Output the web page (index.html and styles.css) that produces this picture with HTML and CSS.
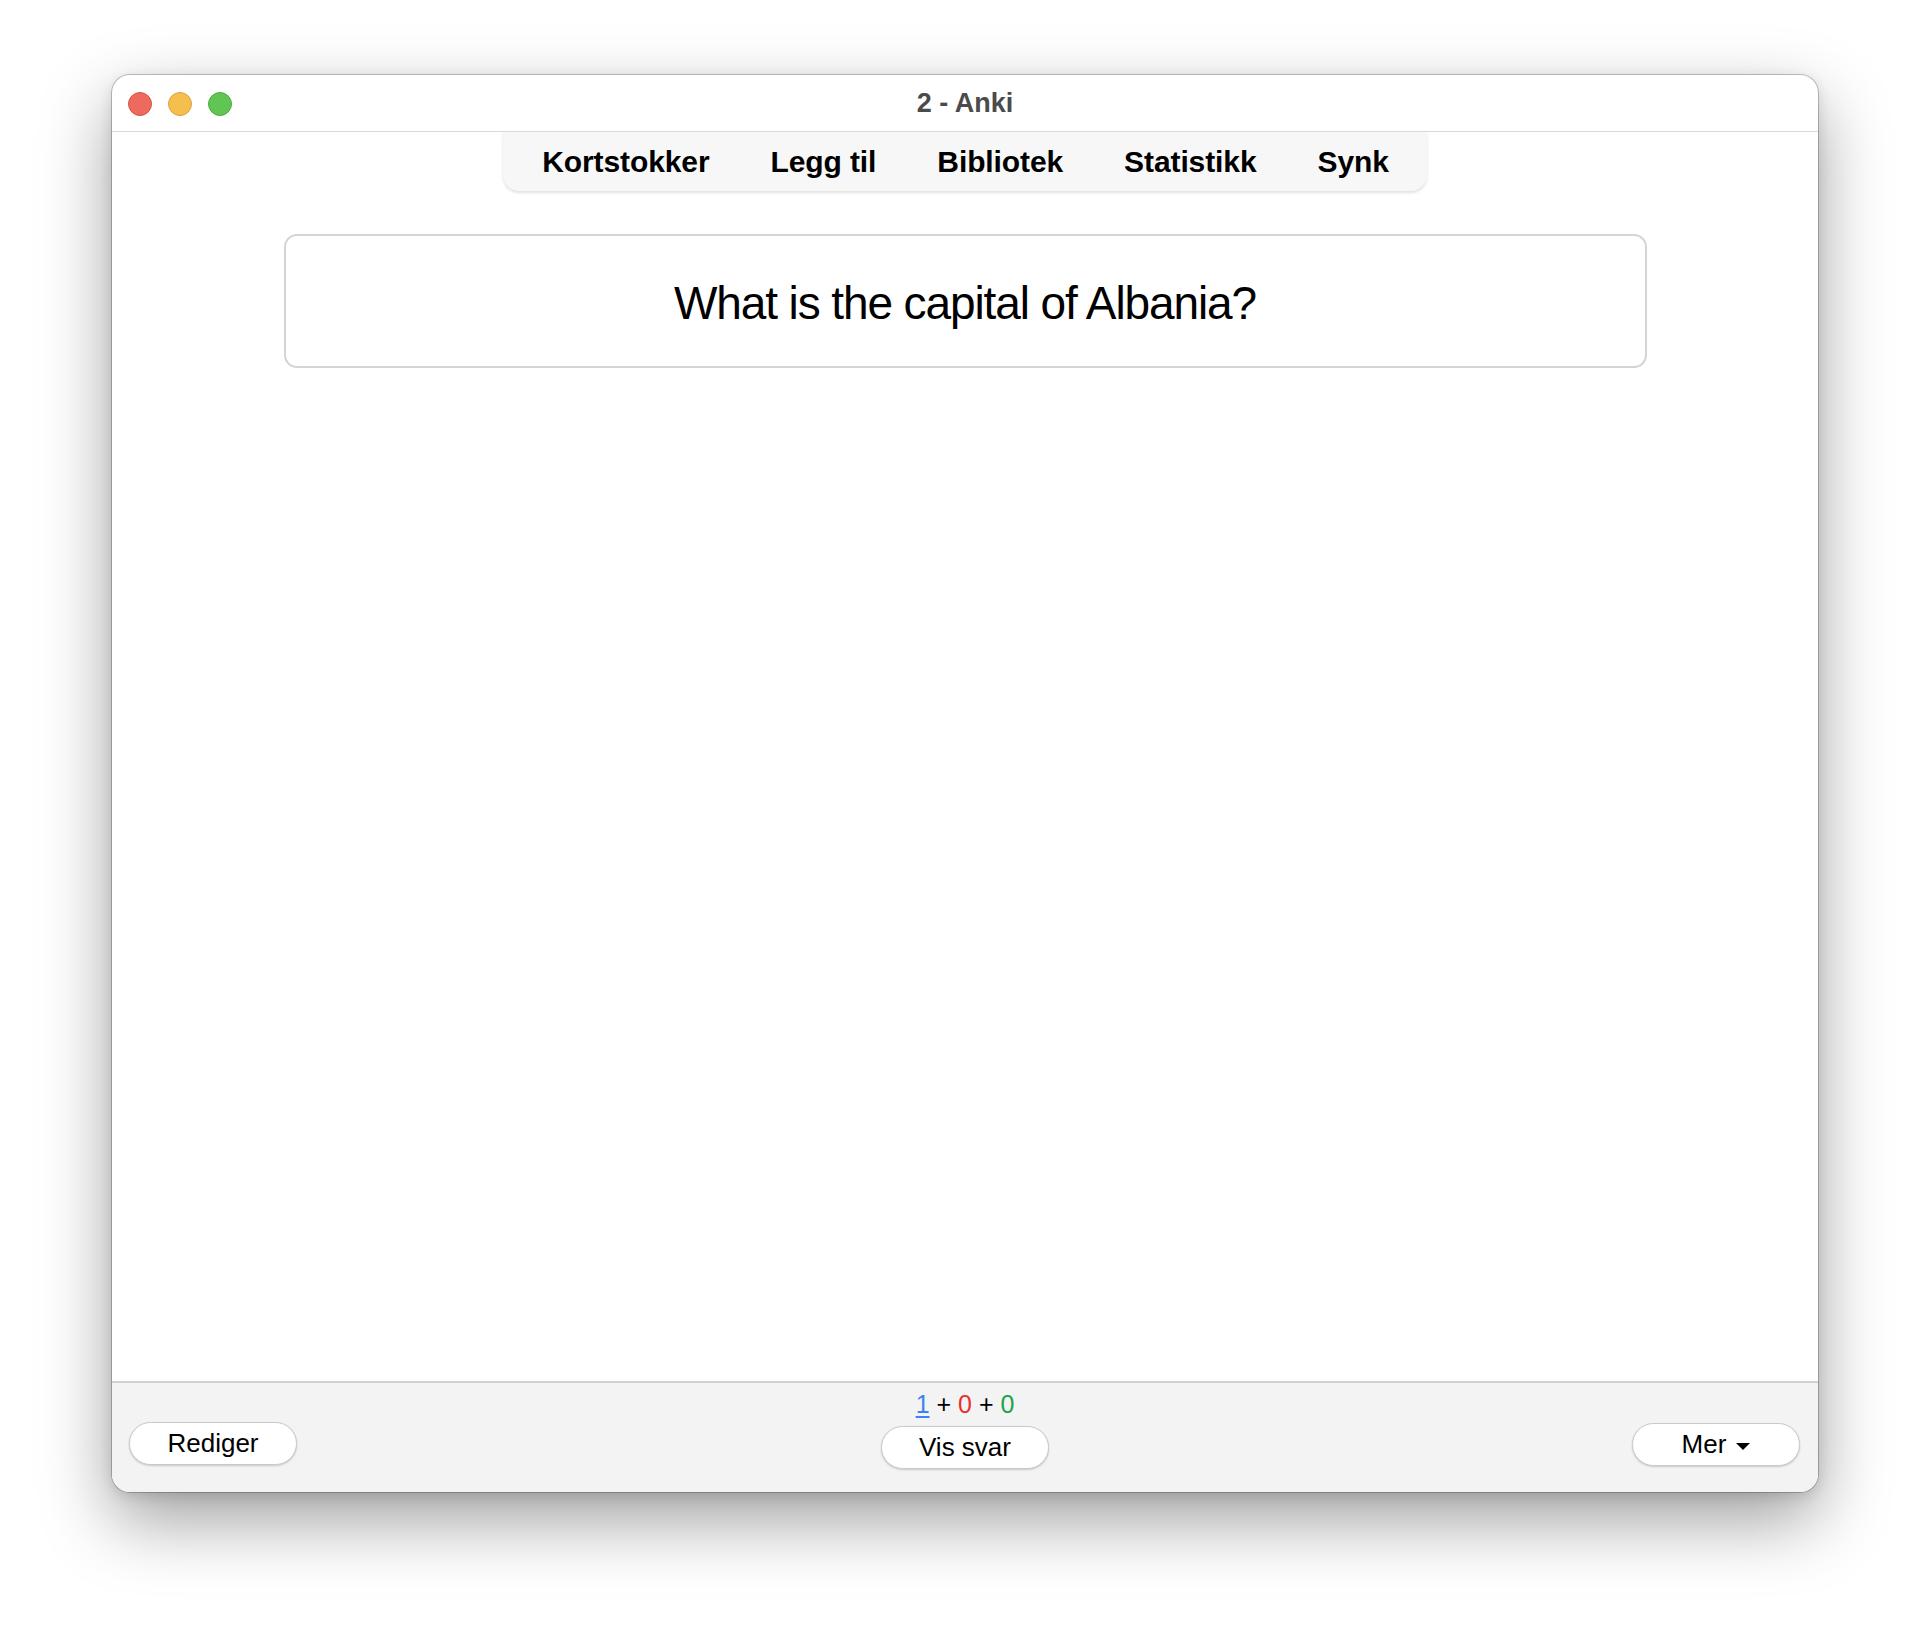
FILE: index.html
```html
<!DOCTYPE html>
<html>
<head>
<meta charset="utf-8">
<title>2 - Anki</title>
<link rel="stylesheet" href="styles.css">
</head>
<body>
<div class="window">
  <div class="titlebar">
    <div class="lights">
      <span class="light red"></span>
      <span class="light yellow"></span>
      <span class="light green"></span>
    </div>
    <div class="title">2 - Anki</div>
  </div>
  <div class="main">
    <nav class="toolbar">
      <span class="tb-item">Kortstokker</span>
      <span class="tb-item">Legg til</span>
      <span class="tb-item">Bibliotek</span>
      <span class="tb-item">Statistikk</span>
      <span class="tb-item">Synk</span>
    </nav>
    <div class="card">What is the capital of Albania?</div>
  </div>
  <div class="bottombar">
    <div class="side left"><button class="btn">Rediger</button></div>
    <div class="center">
      <div class="counts"><span class="new">1</span> + <span class="lrn">0</span> + <span class="due">0</span></div>
      <button class="btn">Vis svar</button>
    </div>
    <div class="side right"><button class="btn">Mer <span class="caret"></span></button></div>
  </div>
</div>
</body>
</html>
```

FILE: styles.css
```css
html, body {
  margin: 0;
  padding: 0;
  background: #ffffff;
}
body {
  width: 1930px;
  height: 1640px;
  padding: 75px 0 0 112px;
  box-sizing: border-box;
  font-family: "Liberation Sans", Arial, sans-serif;
}
.window {
  width: 1706px;
  height: 1417px;
  border-radius: 18px;
  overflow: hidden;
  background: #ffffff;
  box-shadow: 0 0 0 1px rgba(0,0,0,0.22), 0 28px 70px rgba(0,0,0,0.38), 0 4px 14px rgba(0,0,0,0.12);
  display: flex;
  flex-direction: column;
}
.titlebar {
  height: 56px;
  border-bottom: 1px solid #d9d9d9;
  display: flex;
  align-items: center;
  position: relative;
  flex: none;
}
.lights {
  display: flex;
  gap: 16px;
  padding-left: 16px;
  padding-top: 1px;
}
.light {
  width: 24px;
  height: 24px;
  border-radius: 50%;
  box-sizing: border-box;
}
.red { background: #ec6a5e; border: 1px solid #d35548; }
.yellow { background: #f4bf4f; border: 1px solid #d9a23c; }
.green { background: #61c554; border: 1px solid #4ea942; }
.title {
  position: absolute;
  left: 0;
  right: 0;
  top: 0;
  bottom: 0;
  display: flex;
  align-items: center;
  justify-content: center;
  font-weight: bold;
  font-size: 27px;
  color: #4b4b4b;
}
.main {
  flex: 1;
  display: flex;
  flex-direction: column;
  align-items: center;
}
.toolbar {
  display: flex;
  height: 59px;
  align-items: center;
  padding: 0 8px 0 9px;
  background: #f7f7f7;
  border-radius: 0 0 16px 16px;
  box-shadow: 0 2px 3px rgba(0,0,0,0.12);
}
.tb-item {
  font-weight: bold;
  font-size: 30px;
  color: #000;
  padding: 0 30.5px;
  letter-spacing: -0.1px;
}
.card {
  margin-top: 43px;
  width: 1363px;
  height: 134px;
  box-sizing: border-box;
  border: 2px solid #d4d4d4;
  border-radius: 13px;
  display: flex;
  align-items: center;
  justify-content: center;
  font-size: 46px;
  letter-spacing: -1.1px;
  color: #000;
  padding-top: 3px;
}
.bottombar {
  flex: none;
  height: 111px;
  box-sizing: border-box;
  border-top: 2px solid #cfcfcf;
  background: #f3f3f3;
  display: grid;
  grid-template-columns: 1fr auto 1fr;
  align-items: end;
  padding: 5px 18px 23px 17px;
}
.side.left { justify-self: start; margin-bottom: 4px; }
.side.right { justify-self: end; margin-bottom: 3px; }
.center {
  display: flex;
  flex-direction: column;
  align-items: center;
  margin-left: 1px;
}
.counts {
  font-size: 25px;
  line-height: 30px;
  color: #000;
  margin-bottom: 7px;
}
.counts .new { color: #3b82f6; text-decoration: underline; text-underline-offset: 3px; }
.counts .lrn { color: #e5312f; }
.counts .due { color: #1aa44a; }
.btn {
  width: 168px;
  height: 43px;
  border-radius: 22px;
  border: 1px solid #c9c9c9;
  background: #ffffff;
  box-shadow: 0 1px 2px rgba(0,0,0,0.18);
  font-family: "Liberation Sans", Arial, sans-serif;
  font-size: 26px;
  color: #000;
  padding: 0;
  display: flex;
  align-items: center;
  justify-content: center;
  gap: 10px;
}
.caret {
  width: 0;
  height: 0;
  border-left: 7px solid transparent;
  border-right: 7px solid transparent;
  border-top: 7px solid #000;
  margin-top: 3px;
}
```
